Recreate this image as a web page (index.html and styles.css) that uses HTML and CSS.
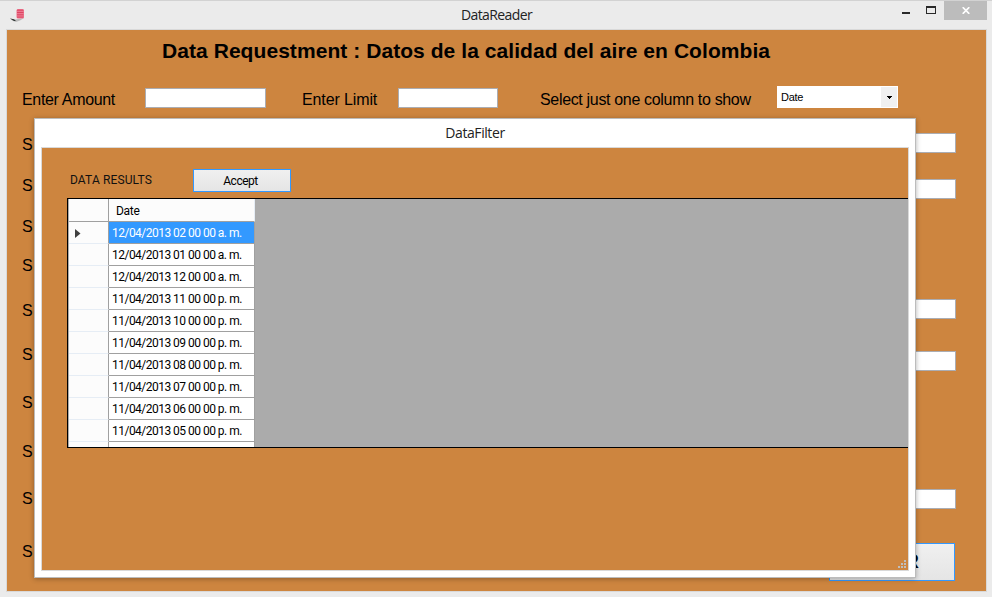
FILE: index.html
```
<!DOCTYPE html>
<html lang="en">
<head>
<meta charset="utf-8">
<title>DataReader</title>
<link rel="stylesheet" href="styles.css">
</head>
<body>
<div class="window">
  <header class="titlebar">
    <svg class="app-icon" width="16" height="14" viewBox="0 0 16 14">
      <path d="M0 9.5 L5 10.5 L14 9 L10 11.5 L6 13 L3 12 Z" fill="#bbb"/>
      <path d="M0 9.5 L4 10.3 L6 12 L4 12 Z" fill="#303735"/>
      <rect x="6.5" y="0" width="7.5" height="9.5" rx="1.5" fill="#ed7890"/>
      <path d="M7 1.2h6.5M7 3.5h6.5M7 5.8h6.5M7 8.1h6.5" stroke="#dc4562" stroke-width="1"/>
    </svg>
    <span class="window-title">DataReader</span>
    <div class="controls">
      <svg width="42" height="20" viewBox="0 0 42 20" shape-rendering="crispEdges">
        <rect x="0" y="12" width="8" height="2" fill="#292929"/>
        <path d="M24 6h10v8h-10zM25 8v5h8v-5z" fill="#292929" fill-rule="evenodd"/>
      </svg>
      <span class="close"><svg width="8" height="7" viewBox="0 0 8 7"><path d="M.7 .2 7.3 6.8M7.3 .2 .7 6.8" stroke="#fff" stroke-width="1.7"/></svg></span>
    </div>
  </header>
  <main class="client">
    <h1 class="heading">Data Requestment : Datos de la calidad del aire en Colombia</h1>
    <div class="query">
      <label class="lbl amount">Enter Amount</label><span class="box amount-box"></span>
      <label class="lbl limit">Enter Limit</label><span class="box limit-box"></span>
      <label class="lbl column">Select just one column to show</label>
      <div class="combo"><span class="combo-text">Date</span><span class="combo-btn"><svg width="5" height="3" viewBox="0 0 5 3" shape-rendering="crispEdges"><path d="M0 0h5v1h-1v1h-1v1h-1v-1h-1v-1h-1z"/></svg></span></div>
    </div>
    <div class="filters">
      <div class="labels"><span>S</span><span>S</span><span>S</span><span>S</span><span>S</span><span>S</span><span>S</span><span>S</span><span>S</span><span>S</span></div>
      <div class="inputs"><span class="box"></span><span class="box"></span><span class="box"></span><span class="box"></span><span class="box"></span><button class="filter-btn">R</button></div>
    </div>
  </main>
</div>
<section class="dialog">
  <div class="dialog-title"><span>DataFilter</span></div>
  <div class="dialog-body">
    <div class="toolbar"><span class="results">DATA RESULTS</span><button class="accept"><span>Accept</span></button></div>
    <div class="datagrid">
      <div class="row head"><i></i><b><span>Date</span></b></div>
      <div class="row selected"><i><svg width="6" height="9" viewBox="0 0 6 9"><path d="M0 0 5.5 4.5 0 9z" fill="#404040"/></svg></i><b><span>12/04/2013 02 00 00 a. m.</span></b></div>
      <div class="row"><i></i><b><span>12/04/2013 01 00 00 a. m.</span></b></div>
      <div class="row"><i></i><b><span>12/04/2013 12 00 00 a. m.</span></b></div>
      <div class="row"><i></i><b><span>11/04/2013 11 00 00 p. m.</span></b></div>
      <div class="row"><i></i><b><span>11/04/2013 10 00 00 p. m.</span></b></div>
      <div class="row"><i></i><b><span>11/04/2013 09 00 00 p. m.</span></b></div>
      <div class="row"><i></i><b><span>11/04/2013 08 00 00 p. m.</span></b></div>
      <div class="row"><i></i><b><span>11/04/2013 07 00 00 p. m.</span></b></div>
      <div class="row"><i></i><b><span>11/04/2013 06 00 00 p. m.</span></b></div>
      <div class="row"><i></i><b><span>11/04/2013 05 00 00 p. m.</span></b></div>
      <div class="row"><i></i><b></b></div>
    </div>
    <svg class="grip" width="8" height="8" viewBox="0 0 8 8" shape-rendering="crispEdges"><path d="M6 0h2v2h-2zM3 3h2v2h-2zM6 3h2v2h-2zM0 6h2v2h-2zM3 6h2v2h-2zM6 6h2v2h-2z" fill="#bfbfbf"/></svg>
  </div>
</section>
</body>
</html>
```
FILE: styles.css
```
* { box-sizing: border-box; }
body { margin: 0; width: 992px; height: 597px; overflow: hidden; position: relative; font-family: "Liberation Sans", Arial, sans-serif; color: #000; }
.window { height: 597px; background: #ebebeb; border-top: 1px solid #d2d2d2; padding: 0 5px 5px 6px; }
.titlebar { height: 28px; display: grid; grid-template-columns: 1fr auto 1fr; align-items: start; }
.app-icon { margin: 8px 0 0 4px; }
.window-title { font: 14px/18px "Open Sans", sans-serif; letter-spacing: -.6px; color: #222; margin: 5px 0 0 0; }
.controls { display: flex; justify-self: end; margin-top: -1px; }
.close { width: 43px; height: 19px; margin-top: 1px; background: #bcbcbc; display: flex; align-items: center; justify-content: center; }
.client { height: 563px; border: 1px solid #d9d9d9; background: #cd853f; }
.heading { margin: 0; padding: 9px 0 0 155px; height: 55px; font-size: 21px; line-height: 24px; letter-spacing: .06px; white-space: nowrap; }
.query { display: flex; align-items: flex-start; height: 48px; padding-left: 15px; }
.lbl { font-size: 16px; line-height: 18px; margin-top: 6px; letter-spacing: -.33px; white-space: nowrap; }
.amount { width: 123px; }
.limit { width: 96px; letter-spacing: -.12px; }
.column { width: 237px; }
.box { display: block; height: 20px; background: #fff; border: 1px solid #abadb3; }
.query .box { margin-top: 3px; }
.amount-box { width: 121px; margin-right: 36px; }
.limit-box { width: 100px; margin-right: 42px; }
.combo { width: 121px; height: 22px; margin-top: 1px; background: #fff; display: flex; justify-content: space-between; padding: 1px; }
.combo-text { font-size: 11px; line-height: 20px; padding-left: 3px; letter-spacing: -.25px; }
.combo-btn { width: 16px; background: #f0f0f0; display: flex; align-items: center; justify-content: center; padding-top: 1px; }
.filters { display: flex; justify-content: space-between; padding: 0 30px 0 15px; }
.labels { display: grid; grid-template-rows: 41px 41px 39px 45px 44px 48px 49px 47px 53px 20px; font-size: 16px; line-height: 20px; padding-top: 2px; }
.inputs { width: 127px; display: grid; grid-template-rows: 46px 120px 52px 138px 54px 38px; }
.filter-btn { width: 126px; height: 38px; border: 1px solid #3399ff; background: linear-gradient(#f0f0f0, #e5e5e5); font: bold 20px "Liberation Sans", sans-serif; text-align: right; padding: 0 35px 2px 0; }
.dialog { position: absolute; left: 34px; top: 118px; width: 882px; height: 460px; background: #fff; border: 1px solid #bcbcbc; padding: 0 6px 6px; box-shadow: 0 1px 5px rgba(0,0,0,.3); }
.dialog-title { height: 28px; text-align: center; font: 14px/28px "Open Sans", sans-serif; letter-spacing: -.42px; color: #222; }
.dialog-body { position: relative; height: 424px; background: #cd853f; border: 1px solid #d9d9d9; padding: 21px 0 0 25px; }
.toolbar { display: flex; height: 29px; }
.results { width: 126px; padding-left: 3px; font: 12px/22px Roboto, sans-serif; letter-spacing: .12px; color: #111; white-space: nowrap; }
.accept { width: 98px; height: 23px; border: 1px solid #3399ff; background: linear-gradient(#f0f0f0, #e5e5e5); padding: 0 3px 0 0; font: 12px/20px Roboto, sans-serif; letter-spacing: -.5px; }
.datagrid { height: 250px; border: 1px solid #000; border-right: 0; background: #ababab; overflow: hidden; padding-left: 1px; }
.row { display: flex; width: 186px; height: 22px; }
.row i { flex: 0 0 40px; background: #fcfcfc; border-right: 1px solid #a0a0a0; border-bottom: 1px solid #e6edf5; display: flex; align-items: center; padding-left: 6px; }
.row b { flex: 1; background: #fff; border-right: 1px solid #a0a0a0; border-bottom: 1px solid #a0a0a0; font: 12px/22px Roboto, sans-serif; letter-spacing: -.52px; padding-left: 3px; white-space: nowrap; }
.row.head { height: 23px; }
.head i, .head b { border-bottom-color: #a0a0a0; }
.head b { background: #fcfcfc; border-right-color: #e6edf5; padding: 1px 0 0 7px; letter-spacing: -.3px; }
.selected i { padding-top: 2px; }
.selected b { background: #3399ff; color: #fff; }
.grip { position: absolute; right: 2px; bottom: 2px; }
```
